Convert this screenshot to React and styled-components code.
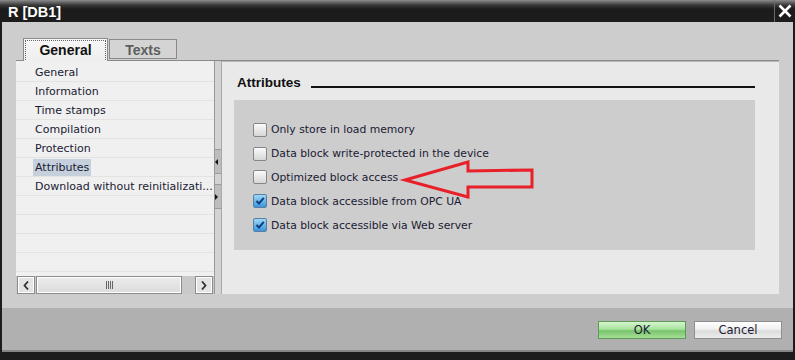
import React from 'react'
import styled, { createGlobalStyle } from 'styled-components'

const GlobalStyle = createGlobalStyle`
  html, body {
    margin: 0;
    padding: 0;
    background: #1c1c1c;
  }
  body {
    font-family: "DejaVu Sans", "Liberation Sans", sans-serif;
  }
`

const Window = styled.div`
  width: 795px;
  height: 360px;
  display: flex;
  flex-direction: column;
  background: #1c1c1c;
  overflow: hidden;
`

const TitleBar = styled.div`
  height: 22px;
  flex: none;
  display: flex;
  align-items: center;
  background: linear-gradient(#8c8c8c 0px, #3a3a3a 5px, #1c1c1c 9px, #1c1c1c 100%);
  color: #ffffff;
`

const Title = styled.div`
  flex: 1;
  padding-left: 8px;
  padding-top: 1px;
  font-family: "Liberation Sans", Arial, sans-serif;
  font-weight: bold;
  font-size: 14.5px;
`

const CloseBox = styled.div`
  width: 20px;
  height: 22px;
  border-left: 1px solid #6a6a6a;
  display: flex;
  align-items: center;
  justify-content: center;
`

const Body = styled.div`
  flex: none;
  height: 286px;
  margin: 0 2px 0 2px;
  background: #cdcdcd;
  display: flex;
  flex-direction: column;
  padding-top: 16px;
  box-sizing: border-box;
`

const Tabs = styled.div`
  display: flex;
  align-items: flex-end;
  height: 22px;
  padding-left: 21px;
  position: relative;
  z-index: 1;
`

const Tab = styled.div`
  height: ${p => (p.$active ? '23px' : '20px')};
  box-sizing: border-box;
  margin-right: 1px;
  padding: 1px;
  display: flex;
  font-family: "Liberation Sans", Arial, sans-serif;
  font-size: 14px;
  font-weight: bold;
  color: ${p => (p.$active ? '#111' : '#5e5e5e')};
  background: ${p => (p.$active ? 'linear-gradient(#f7f7f7, #eeeeee)' : '#d4d4d4')};
  border: 1px solid #8a8a8a;
  border-bottom: ${p => (p.$active ? 'none' : '1px solid #8a8a8a')};
  margin-bottom: ${p => (p.$active ? '-1px' : '1px')};
  width: ${p => p.$w}px;
`

const TabInner = styled.span`
  flex: 1;
  display: flex;
  align-items: center;
  justify-content: center;
  border: 1px dotted ${p => (p.$focus ? '#666' : 'transparent')};
  border-bottom: none;
  padding-bottom: ${p => (p.$focus ? '2px' : '0')};
`

const Content = styled.div`
  display: flex;
  height: 234px;
  margin: 0 14px;
  border-top: 1px solid #8a8a8a;
  box-sizing: border-box;
`

const NavPanel = styled.div`
  width: 198px;
  display: flex;
  flex-direction: column;
  background: #f0f0f0;
`

const NavList = styled.div`
  flex: 1;
  padding-top: 2px;
  overflow: hidden;
`

const NavRow = styled.div`
  height: 19px;
  box-sizing: border-box;
  border-bottom: 1px solid #e3e3e3;
  padding-left: 17px;
  display: flex;
  align-items: center;
  font-size: 11px;
  color: #1a1a33;
  white-space: nowrap;
`

const NavLabel = styled.span`
  padding: 2px 2px;
  background: ${p => (p.$selected ? '#c5d0dc' : 'transparent')};
`

const HScroll = styled.div`
  height: 18px;
  display: flex;
  align-items: center;
  background: #c9c9c9;
  padding: 0 1px;
  gap: 1px;
`

const ScrollBtn = styled.div`
  width: 16px;
  height: 16px;
  border: 1px solid #8c8c8c;
  box-shadow: inset 0 0 0 1px #ffffff;
  background: #e4e4e4;
  display: flex;
  align-items: center;
  justify-content: center;
`

const ScrollThumb = styled.div`
  width: 144px;
  height: 16px;
  border: 1px solid #8c8c8c;
  box-shadow: inset 0 0 0 1px #ffffff;
  background: linear-gradient(#ececec, #dcdcdc);
  display: flex;
  align-items: center;
  justify-content: center;
`

const ScrollSpacer = styled.div`
  flex: 1;
`

const Splitter = styled.div`
  width: 6px;
  background: #d3d3d3;
  border-left: 1px solid #9a9a9a;
  border-right: 1px solid #a8a8a8;
  display: flex;
  flex-direction: column;
  padding-top: 88px;
`

const SplitBtn = styled.div`
  height: 23px;
  background: #bdbdbd;
  border-top: 1px solid #9a9a9a;
  border-bottom: 1px solid #9a9a9a;
  display: flex;
  align-items: center;
  margin-bottom: 10px;
`

const RightPane = styled.div`
  width: 557px;
  background: #e9e9e9;
  border-top: 1px solid #b8b8b8;
  padding: 9px 24px 0 12px;
  box-sizing: border-box;
`

const HeadingRow = styled.div`
  display: flex;
  align-items: flex-end;
  height: 20px;
  padding-left: 3px;
  margin-bottom: 9px;
`

const Heading = styled.div`
  font-family: "Liberation Sans", Arial, sans-serif;
  font-size: 13.5px;
  font-weight: bold;
  color: #111;
  margin-right: 10px;
  line-height: 16px;
`

const HeadingRule = styled.div`
  flex: 1;
  height: 2px;
  background: #111;
  margin-bottom: 3px;
`

const AttrBox = styled.div`
  position: relative;
  height: 150px;
  background: #cdcdcd;
  padding: 18px 0 0 19px;
  box-sizing: border-box;
`

const CheckRow = styled.div`
  height: 23.8px;
  display: flex;
  align-items: center;
  gap: 4px;
  font-size: 10.8px;
  color: #1a1a33;
`

const Box = styled.div`
  width: 14px;
  height: 14px;
  box-sizing: border-box;
  border: 1px solid #868686;
  border-radius: 2px;
  background: linear-gradient(#fafafa, #d6d6d6);
  display: flex;
  align-items: center;
  justify-content: center;
`

const CheckedBox = styled(Box)`
  border-color: #5b7fa3;
  background: linear-gradient(#9fd7f7, #3b95d8);
`

const ArrowSvg = styled.svg`
  position: absolute;
  left: 0;
  top: 0;
  pointer-events: none;
`

const Footer = styled.div`
  flex: none;
  height: 42px;
  margin: 0 2px;
  background: #b0b0b0;
  border-bottom: 2px solid #858585;
  display: flex;
  align-items: center;
  justify-content: flex-end;
  padding-right: 11px;
  gap: 8px;
`

const Button = styled.div`
  width: 88px;
  height: 18px;
  box-sizing: border-box;
  border: 1px solid ${p => (p.$primary ? '#5d9a55' : '#8e8e8e')};
  background: ${p =>
    p.$primary
      ? 'linear-gradient(#d6f5cf 0%, #a9e39d 45%, #79c46c 55%, #a6de98 100%)'
      : 'linear-gradient(#ffffff 0%, #f0f0f0 45%, #dcdcdc 55%, #ececec 100%)'};
  display: flex;
  align-items: center;
  justify-content: center;
  font-size: 11.5px;
  color: #1a1a33;
  margin-top: 1px;
`

const navItems = [
  'General',
  'Information',
  'Time stamps',
  'Compilation',
  'Protection',
  'Attributes',
  'Download without reinitializati...',
  '',
  '',
  '',
  '',
  '',
]

const attrs = [
  { label: 'Only store in load memory', checked: false },
  { label: 'Data block write-protected in the device', checked: false },
  { label: 'Optimized block access', checked: false },
  { label: 'Data block accessible from OPC UA', checked: true },
  { label: 'Data block accessible via Web server', checked: true },
]

const Check = ({ checked }) =>
  checked ? (
    <CheckedBox>
      <svg width="10" height="10" viewBox="0 0 10 10">
        <path d="M1.5 5 L4 7.5 L8.8 1.8" fill="none" stroke="#0f3f7d" strokeWidth="2" />
      </svg>
    </CheckedBox>
  ) : (
    <Box />
  )

export default function App() {
  return (
    <Window>
      <GlobalStyle />
      <TitleBar>
        <Title>R [DB1]</Title>
        <CloseBox>
          <svg width="14" height="14" viewBox="0 0 14 14">
            <path d="M1.5 1.5 L12.5 12.5 M12.5 1.5 L1.5 12.5" stroke="#fff" strokeWidth="2.6" />
          </svg>
        </CloseBox>
      </TitleBar>
      <Body>
        <Tabs>
          <Tab $active $w={85}>
            <TabInner $focus>General</TabInner>
          </Tab>
          <Tab $w={68}>
            <TabInner>Texts</TabInner>
          </Tab>
        </Tabs>
        <Content>
          <NavPanel>
            <NavList>
              {navItems.map((item, i) => (
                <NavRow key={i}>
                  <NavLabel $selected={item === 'Attributes'}>{item}</NavLabel>
                </NavRow>
              ))}
            </NavList>
            <HScroll>
              <ScrollBtn>
                <svg width="6" height="9" viewBox="0 0 6 9">
                  <path d="M5 0.5 L1.5 4.5 L5 8.5" fill="none" stroke="#333" strokeWidth="1.8" />
                </svg>
              </ScrollBtn>
              <ScrollThumb>
                <svg width="7" height="8" viewBox="0 0 7 8">
                  <path d="M0.5 0 V8 M2.5 0 V8 M4.5 0 V8 M6.5 0 V8" stroke="#666" strokeWidth="1" />
                </svg>
              </ScrollThumb>
              <ScrollSpacer />
              <ScrollBtn>
                <svg width="6" height="9" viewBox="0 0 6 9">
                  <path d="M1 0.5 L4.5 4.5 L1 8.5" fill="none" stroke="#333" strokeWidth="1.8" />
                </svg>
              </ScrollBtn>
            </HScroll>
          </NavPanel>
          <Splitter>
            <SplitBtn>
              <svg width="4" height="6" viewBox="0 0 4 6">
                <path d="M3 0 L0 3 L3 6 Z" fill="#111" />
              </svg>
            </SplitBtn>
            <SplitBtn>
              <svg width="4" height="6" viewBox="0 0 4 6">
                <path d="M0 0 L3 3 L0 6 Z" fill="#111" />
              </svg>
            </SplitBtn>
          </Splitter>
          <RightPane>
            <HeadingRow>
              <Heading>Attributes</Heading>
              <HeadingRule />
            </HeadingRow>
            <AttrBox>
              {attrs.map(a => (
                <CheckRow key={a.label}>
                  <Check checked={a.checked} />
                  <span>{a.label}</span>
                </CheckRow>
              ))}
              <ArrowSvg width="310" height="110" viewBox="0 0 310 110">
                <path
                  d="M171 80 L234 62 L234 71 L298 70 L298 87 L234 87 L234 97 Z"
                  fill="none"
                  stroke="#e8202a"
                  strokeWidth="3"
                  strokeLinejoin="miter"
                />
              </ArrowSvg>
            </AttrBox>
          </RightPane>
        </Content>
      </Body>
      <Footer>
        <Button $primary>OK</Button>
        <Button>Cancel</Button>
      </Footer>
    </Window>
  )
}
